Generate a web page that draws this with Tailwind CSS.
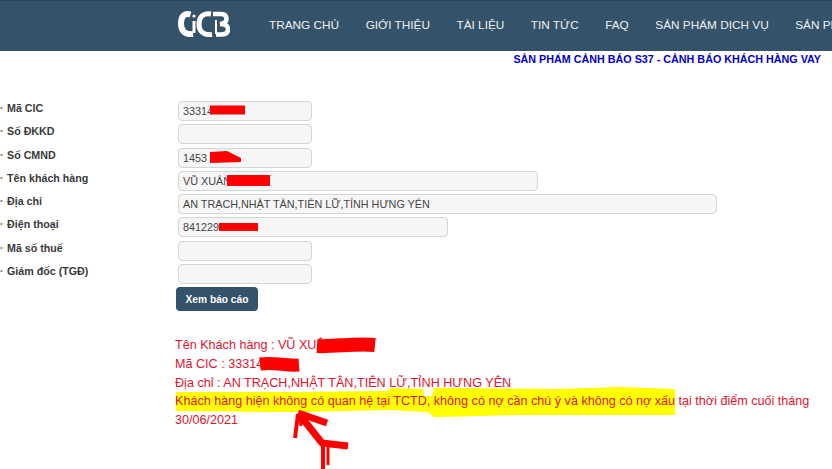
<!DOCTYPE html>
<html lang="vi">
<head>
    <meta charset="UTF-8">
    <title>CIC - Sản phẩm cảnh báo S37</title>
    <script src="https://cdn.jsdelivr.net/npm/@tailwindcss/browser@4"></script>
</head>
<body class="relative w-[832px] h-[469px] overflow-hidden bg-white font-['Liberation_Sans',Arial,sans-serif]">
    <!-- Yellow marker behind the result text -->
    <svg class="absolute left-0 top-0 w-[832px] h-[469px] -z-10" viewBox="0 0 832 469">
        <path fill="#ffff00" d="M176 392 H300 L388 391 L390 388 L423 389 L424 396 L432 396 L434 388 L560 389 L620 387 L675 389 L675 415 L600 415 L520 415 L434 417 L428 412 L388 410 L300 412 L176 411 Z"/>
    </svg>

    <!-- Header -->
    <header class="h-[51px] bg-[#34526a] border-t border-[#2c4760] flex items-center pl-[178px] overflow-hidden">
        <svg class="w-[52px] h-[26px] shrink-0 -mt-[5px]" viewBox="0 0 52 26" fill="none" stroke="#fff">
            <path d="M12.500 3.500 C6 1.500 3 6 3 12.500 C3 20 7 24 15 23" stroke-width="6"/>
            <path d="M16 10 V22" stroke-width="3"/>
            <circle cx="16" cy="5" r="1.600" fill="#fff" stroke="none"/>
            <path d="M33 3 C25 1.500 21 6 21 13 C21 20 25 24.500 34 23.500" stroke-width="5"/>
            <path d="M35 3 H43 C47.500 3 48.500 5.500 48.500 8 C48.500 11 46 12.500 42 13 C46.500 13 50 14.500 50 18.500 C50 22.500 46.500 23.500 43 23.500 H38" stroke-width="4.500"/>
            <path d="M38 9 V23" stroke-width="2"/>
        </svg>
        <nav class="flex gap-[26.500px] ml-[39px] text-[11.800px] text-[#eef1f3] whitespace-nowrap">
            <a>TRANG CHỦ</a>
            <a>GIỚI THIỆU</a>
            <a>TÀI LIỆU</a>
            <a>TIN TỨC</a>
            <a>FAQ</a>
            <a>SẢN PHẨM DỊCH VỤ</a>
            <a>SẢN PHẨM</a>
        </nav>
    </header>

    <h1 class="mt-[1px] pr-[11px] text-right text-[10.750px] leading-[14px] font-bold text-[#0000cc]">SẢN PHẨM CẢNH BÁO S37 - CẢNH BÁO KHÁCH HÀNG VAY</h1>

    <!-- Form -->
    <form class="mt-[35px] flex flex-col gap-[3.300px] text-[10.700px] font-bold text-[#3a3a3a]">
        <div class="flex h-[20px]">
            <label class="w-[178px] pl-[7px] -mt-[1px] relative before:content-['•'] before:absolute before:left-0 before:top-[2px] before:text-[#888] before:text-[8px] before:font-normal">Mã CIC</label>
            <div class="w-[134px] h-[20px] rounded-[4px] border border-[#d5d5d5] bg-[#f6f6f6] px-[4px] text-[10.800px] font-normal text-[#444] leading-[19px]">33314</div>
        </div>
        <div class="flex h-[20px]">
            <label class="w-[178px] pl-[7px] -mt-[1px] relative before:content-['•'] before:absolute before:left-0 before:top-[2px] before:text-[#888] before:text-[8px] before:font-normal">Số ĐKKD</label>
            <div class="w-[134px] h-[20px] rounded-[4px] border border-[#d5d5d5] bg-[#f6f6f6]"></div>
        </div>
        <div class="flex h-[20px]">
            <label class="w-[178px] pl-[7px] -mt-[1px] relative before:content-['•'] before:absolute before:left-0 before:top-[2px] before:text-[#888] before:text-[8px] before:font-normal">Số CMND</label>
            <div class="w-[134px] h-[20px] rounded-[4px] border border-[#d5d5d5] bg-[#f6f6f6] px-[4px] text-[10.800px] font-normal text-[#444] leading-[19px]">1453</div>
        </div>
        <div class="flex h-[20px]">
            <label class="w-[178px] pl-[7px] -mt-[1px] relative before:content-['•'] before:absolute before:left-0 before:top-[2px] before:text-[#888] before:text-[8px] before:font-normal">Tên khách hàng</label>
            <div class="w-[360px] h-[20px] rounded-[4px] border border-[#d5d5d5] bg-[#f6f6f6] px-[4px] text-[10.800px] font-normal text-[#444] leading-[19px]">VŨ XUÂN</div>
        </div>
        <div class="flex h-[20px]">
            <label class="w-[178px] pl-[7px] -mt-[1px] relative before:content-['•'] before:absolute before:left-0 before:top-[2px] before:text-[#888] before:text-[8px] before:font-normal">Địa chỉ</label>
            <div class="w-[539px] h-[20px] rounded-[4px] border border-[#d5d5d5] bg-[#f6f6f6] px-[4px] text-[10.800px] font-normal text-[#444] leading-[19px]">AN TRẠCH,NHẬT TÂN,TIÊN LỮ,TỈNH HƯNG YÊN</div>
        </div>
        <div class="flex h-[20px]">
            <label class="w-[178px] pl-[7px] -mt-[1px] relative before:content-['•'] before:absolute before:left-0 before:top-[2px] before:text-[#888] before:text-[8px] before:font-normal">Điện thoại</label>
            <div class="w-[270px] h-[20px] rounded-[4px] border border-[#d5d5d5] bg-[#f6f6f6] px-[4px] text-[10.800px] font-normal text-[#444] leading-[19px]">841229</div>
        </div>
        <div class="flex h-[20px]">
            <label class="w-[178px] pl-[7px] -mt-[1px] relative before:content-['•'] before:absolute before:left-0 before:top-[2px] before:text-[#888] before:text-[8px] before:font-normal">Mã số thuế</label>
            <div class="w-[134px] h-[20px] rounded-[4px] border border-[#d5d5d5] bg-[#f6f6f6]"></div>
        </div>
        <div class="flex h-[20px]">
            <label class="w-[178px] pl-[7px] -mt-[1px] relative before:content-['•'] before:absolute before:left-0 before:top-[2px] before:text-[#888] before:text-[8px] before:font-normal">Giám đốc (TGĐ)</label>
            <div class="w-[134px] h-[20px] rounded-[4px] border border-[#d5d5d5] bg-[#f6f6f6]"></div>
        </div>
        <div class="pl-[176px]">
            <button type="button" class="w-[82px] h-[24px] rounded-[4px] bg-[#34526a] text-white text-[10.200px] font-bold">Xem báo cáo</button>
        </div>
    </form>

    <!-- Result -->
    <div class="mt-[25px] ml-[175px] w-[640px] text-[12.600px] leading-[18.700px] text-[#e2122e]">
        <p>Tên Khách hàng : VŨ XUÂN</p>
        <p>Mã CIC : 33314</p>
        <p>Địa chỉ : AN TRẠCH,NHẬT TÂN,TIÊN LỮ,TỈNH HƯNG YÊN</p>
        <p>Khách hàng hiện không có quan hệ tại TCTD, không có nợ cần chú ý và không có nợ xấu tại thời điểm cuối tháng 30/06/2021</p>
    </div>

    <!-- Red marker scribbles over the private data -->
    <svg class="absolute left-0 top-0 w-[832px] h-[469px] pointer-events-none" viewBox="0 0 832 469" fill="none" stroke="#ff0000" stroke-linejoin="round">
        <path d="M210 110 H245" stroke-width="9"/>
        <path d="M210 152 L227 151 L241 158 V162 L210 163 Z" fill="#ff0000" stroke="none"/>
        <path d="M227 180.500 H270" stroke-width="11"/>
        <path d="M219 227 H258" stroke-width="8"/>
        <path d="M317 346 C335 347 355 343 375 345" stroke-width="14"/>
        <path d="M260 364 C275 362 285 366 299 365" stroke-width="13"/>
        <!-- hand drawn arrow -->
        <path d="M295 438 L298 414" stroke-width="4"/>
        <path d="M301 426 L300 414" stroke-width="3"/>
        <path d="M298 413 L327 423" stroke-width="7"/>
        <path d="M299 414 L322 443 L348 446" stroke-width="7"/>
        <path d="M323 443 V469" stroke-width="4"/>
        <path d="M328 443 V465" stroke-width="3"/>
    </svg>
</body>
</html>
